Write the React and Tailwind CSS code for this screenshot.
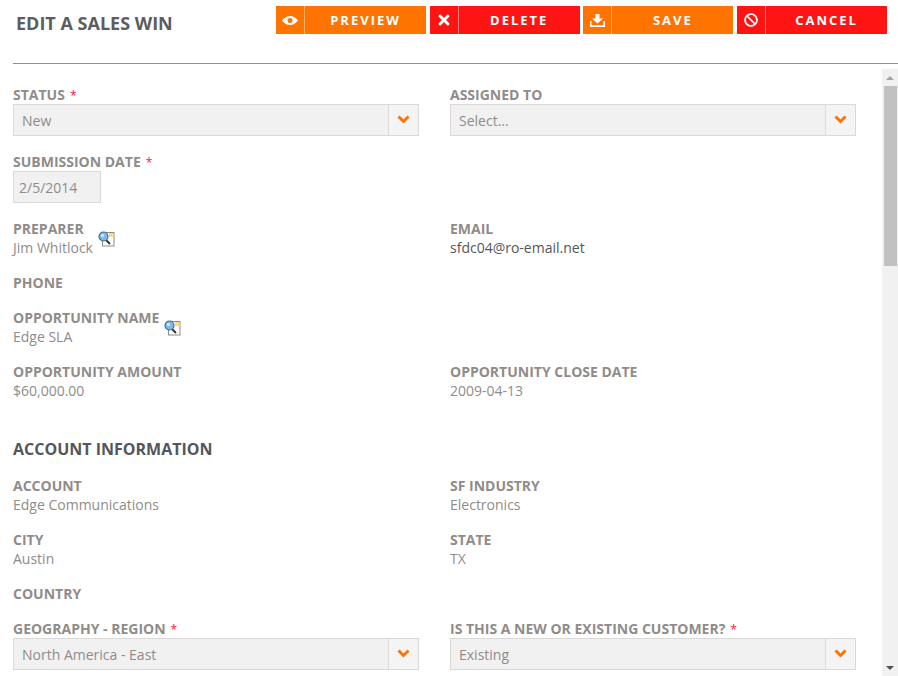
import React from "react";
import { FaTimes, FaBan } from "react-icons/fa";

const font = { fontFamily: '"Open Sans", sans-serif' };

function Eye() {
  return (
    <svg width="16" height="9" viewBox="0 0 16 9">
      <path fillRule="evenodd" fill="#fff" d="M0 4.5C2.5 1.5 5 0 8 0s5.5 1.5 8 4.5C13.500 7.500 11 9 8 9S2.500 7.500 0 4.500ZM8 2a2.500 2.500 0 1 0 0 5a2.500 2.500 0 0 0 0-5Z" />
    </svg>
  );
}

function Save() {
  return (
    <svg width="15" height="13" viewBox="0 0 15 13" fill="#fff">
      <path d="M5.500 0h4v4.500H13L7.500 9.500L2 4.500h3.500Z" />
      <path d="M0 7h1.500v4.200h12V7H15v6H0Z" />
    </svg>
  );
}

function Chevron() {
  return (
    <svg width="13" height="9" viewBox="0 0 13 9" className="mb-[2px]">
      <path d="M1.500 1.500L6.500 6.500L11.500 1.500" fill="none" stroke="#ff7300" strokeWidth="3" />
    </svg>
  );
}

function Btn({ icon, label, red }) {
  return (
    <div className={`flex h-[28px] w-[150px] items-stretch text-white ${red ? "bg-[#ff1414]" : "bg-[#ff7300]"}`}>
      <div className={`flex w-[29px] shrink-0 items-center justify-center border-r ${red ? "border-r-[#ff7a7a]" : "border-r-[#ffb060]"}`}>
        {icon}
      </div>
      <div className="flex flex-1 items-center justify-center pt-[1px] text-[13px] font-bold tracking-[2px]">{label}</div>
    </div>
  );
}

function Label({ children, req }) {
  return (
    <div className="h-[19px] text-[14px] font-bold leading-[19px] text-[#8f8c8a]">
      {children}
      {req && <span className="ml-[5px] text-[12px] font-normal text-[#ff1440]">*</span>}
    </div>
  );
}

function Value({ children, dark }) {
  return <div className={`h-[19px] text-[14px] leading-[19px] ${dark ? "text-[#55565a]" : "text-[#8f8c8a]"}`}>{children}</div>;
}

function Select({ value }) {
  return (
    <div className="flex h-[32px] w-[406px] items-stretch border border-[#dad9d8] bg-[#f2f1f1] text-[14px] text-[#8f8c8a]">
      <div className="flex flex-1 items-center pl-[8px]">{value}</div>
      <div className="flex w-[30px] items-center justify-center border-l border-l-[#dcdbda] bg-[#f4f4f4]">
        <Chevron />
      </div>
    </div>
  );
}

function Lookup() {
  return (
    <svg width="17" height="16" viewBox="0 0 17 16" className="ml-[5px] mt-[12px] shrink-0">
      <rect x="4.5" y="1.5" width="11.5" height="13.5" fill="#fff" stroke="#8a8a8a" />
      <rect x="11" y="2" width="4.5" height="4" fill="#ffd878" />
      <line x1="7" y1="8" x2="12" y2="13" stroke="#333" strokeWidth="2" />
      <circle cx="5.5" cy="5.5" r="4.5" fill="#7fbbe6" stroke="#3f6f9c" strokeWidth="1.2" />
      <circle cx="4.5" cy="4.5" r="1.5" fill="#d8eefb" />
    </svg>
  );
}

function Field({ label, value, req, lookup, dark }) {
  return (
    <div className="mb-[16px]">
      <div className="flex items-start">
        <div>
          <Label req={req}>{label}</Label>
          {value && <Value dark={dark}>{value}</Value>}
        </div>
        {lookup && <Lookup />}
      </div>
    </div>
  );
}

function SelectField({ label, value, req }) {
  return (
    <div className="mb-[16px]">
      <Label req={req}>{label}</Label>
      <Select value={value} />
    </div>
  );
}

export default function App() {
  return (
    <div className="h-[676px] w-[898px] overflow-hidden bg-white" style={font}>
      <div className="ml-[13px] flex h-[64px] items-start justify-between border-b border-b-[#909090] pr-[11px] pt-[6px]">
        <div className="ml-[3px] text-[18px] font-bold leading-[34px] text-[#5c5d60]">EDIT A SALES WIN</div>
        <div className="flex gap-[3.67px]">
          <Btn icon={<Eye />} label="PREVIEW" />
          <Btn icon={<FaTimes className="h-[16px] w-[16px]" />} label="DELETE" red />
          <Btn icon={<Save />} label="SAVE" />
          <Btn icon={<FaBan className="h-[14px] w-[14px]" />} label="CANCEL" red />
        </div>
      </div>

      <div className="flex h-[612px]">
        <div className="flex-1 pl-[13px] pt-[21px]">
          <div className="grid grid-cols-[437px_1fr]">
            <SelectField label="STATUS" value="New" req />
            <SelectField label="ASSIGNED TO" value="Select..." />
            <div className="col-span-2 mb-[16px]">
              <Label req>SUBMISSION DATE</Label>
              <div className="flex h-[32px] w-[88px] items-center border border-[#dad9d8] bg-[#f2f1f1] pl-[5px] text-[14px] text-[#8f8c8a]">2/5/2014</div>
            </div>
            <Field label="PREPARER" value="Jim Whitlock" lookup />
            <Field label="EMAIL" value="sfdc04@ro-email.net" dark />
            <div className="col-span-2"><Field label="PHONE" /></div>
            <div className="col-span-2"><Field label="OPPORTUNITY NAME" value="Edge SLA" lookup /></div>
            <Field label="OPPORTUNITY AMOUNT" value="$60,000.00" />
            <Field label="OPPORTUNITY CLOSE DATE" value="2009-04-13" />
          </div>
          <div className="mb-[15px] mt-[21px] h-[24px] text-[16px] font-bold leading-[24px] text-[#55565a]">ACCOUNT INFORMATION</div>
          <div className="grid grid-cols-[437px_1fr]">
            <Field label="ACCOUNT" value="Edge Communications" />
            <Field label="SF INDUSTRY" value="Electronics" />
            <Field label="CITY" value="Austin" />
            <Field label="STATE" value="TX" />
            <div className="col-span-2"><Field label="COUNTRY" /></div>
            <SelectField label="GEOGRAPHY - REGION" value="North America - East" req />
            <SelectField label="IS THIS A NEW OR EXISTING CUSTOMER?" value="Existing" req />
          </div>
        </div>

        <div className="mt-[5px] flex w-[16px] shrink-0 flex-col items-center bg-[#f1f1f1]">
          <div className="flex h-[17px] w-full items-center justify-center">
            <div className="h-0 w-0 border-x-[4px] border-b-[4px] border-x-transparent border-b-[#a3a3a3]" />
          </div>
          <div className="h-[180px] w-[13px] bg-[#c1c1c1]" />
          <div className="flex-1" />
          <div className="flex h-[17px] w-full items-center justify-center">
            <div className="h-0 w-0 border-x-[4px] border-t-[4px] border-x-transparent border-t-[#505050]" />
          </div>
        </div>
      </div>
    </div>
  );
}
